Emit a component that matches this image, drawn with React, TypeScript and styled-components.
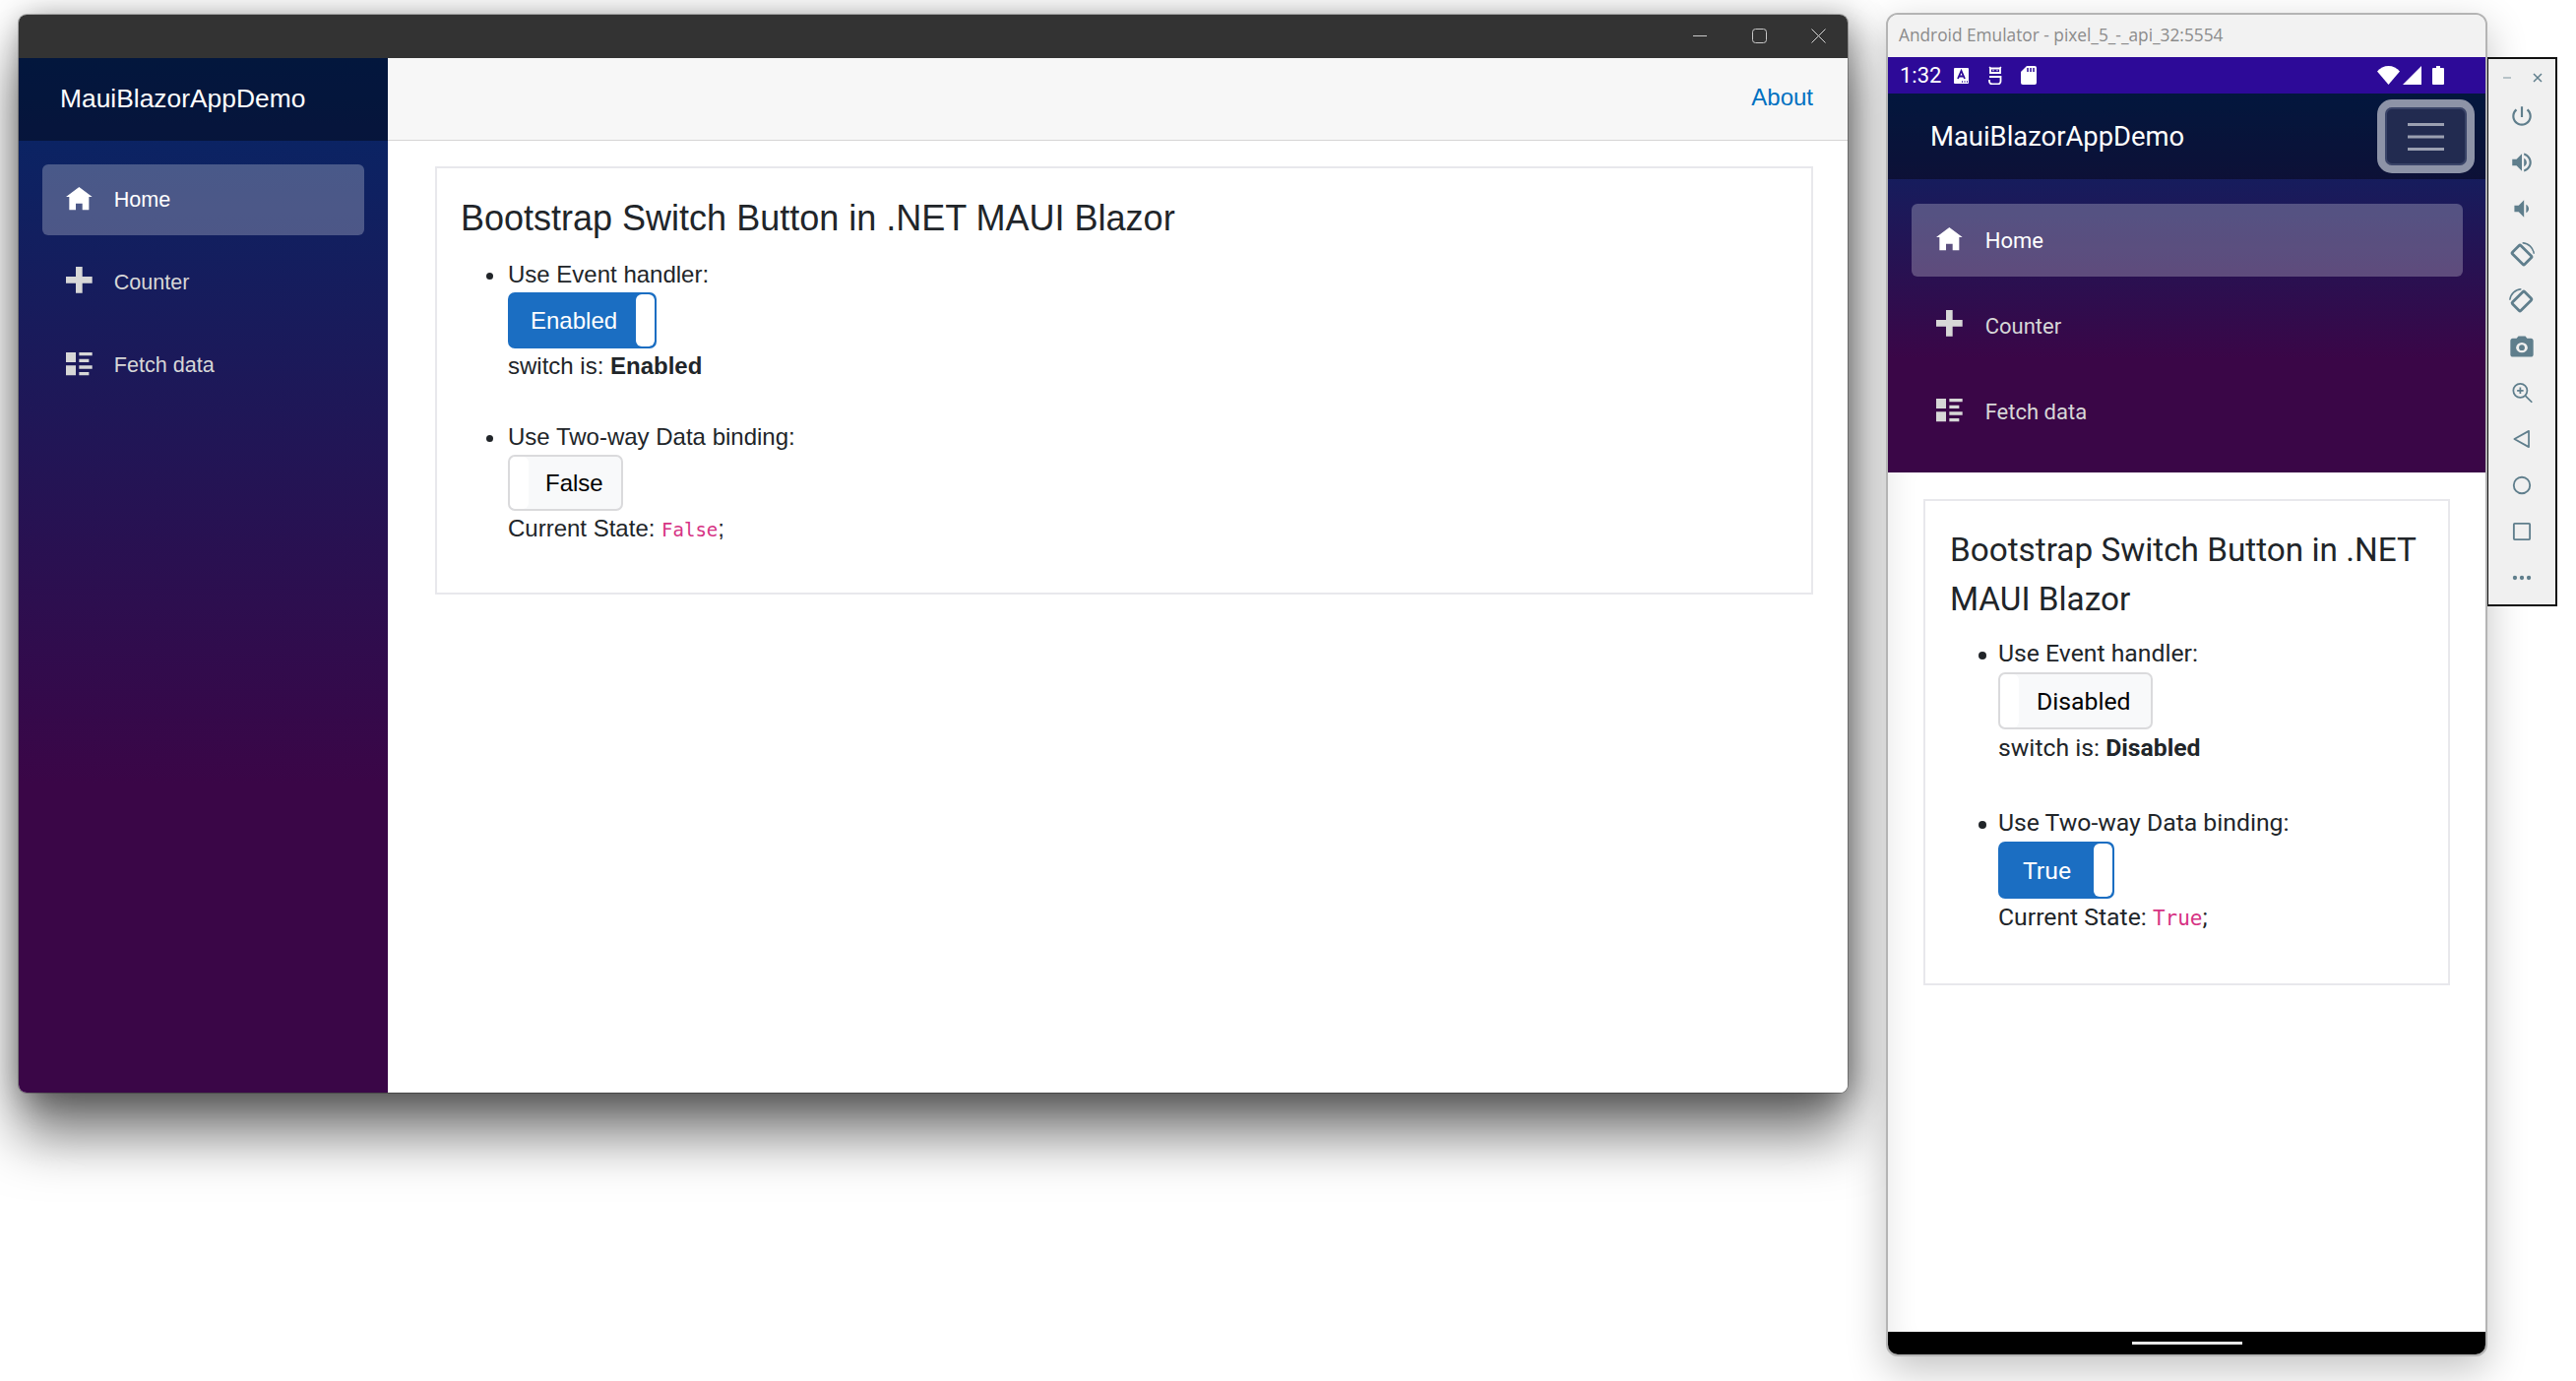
import React from "react";
import styled, { createGlobalStyle } from "styled-components";

const Global = createGlobalStyle`
  html, body { margin: 0; padding: 0; background: #fff; overflow: hidden; }
  * { box-sizing: border-box; }
`;

const Desktop = styled.div`
  width: 2617px;
  height: 1403px;
  padding: 13px 0 0 19px;
  display: flex;
  align-items: flex-start;
  background: #fff;
  overflow: hidden;
`;

/* ---------- desktop window ---------- */
const AppWindow = styled.div`
  width: 1858px;
  height: 1095px;
  margin: 2px 39px 0 0;
  display: flex;
  flex-direction: column;
  border-radius: 8px;
  overflow: hidden;
  flex: none;
  background: #fff;
  font-family: "Liberation Sans", Arial, sans-serif;
  box-shadow: 0 0 0 1px rgba(0, 0, 0, 0.25), 4px 4px 34px rgba(0, 0, 0, 0.42), 0 44px 56px rgba(0, 0, 0, 0.52);
`;
const TitleBar = styled.div`
  height: 44px;
  flex: none;
  background: #333333;
  display: flex;
  align-items: center;
  justify-content: flex-end;
  gap: 45px;
  padding: 0 22px 1px 0;
`;
const AppBody = styled.div`
  flex: 1;
  display: flex;
  min-height: 0;
`;
const Sidebar = styled.div<{ $mobile?: boolean }>`
  display: flex;
  flex-direction: column;
  flex: none;
  width: ${(p) => (p.$mobile ? "100%" : "375px")};
  height: ${(p) => (p.$mobile ? "385px" : "100%")};
  background: linear-gradient(180deg, rgb(5, 39, 103) 0%, #3a0647 70%);
`;
const BrandRow = styled.div<{ $mobile?: boolean }>`
  height: ${(p) => (p.$mobile ? "87px" : "84px")};
  flex: none;
  background: rgba(0, 0, 0, 0.4);
  display: flex;
  align-items: center;
  justify-content: space-between;
  padding: ${(p) => (p.$mobile ? "0 11px 0 43px" : "0 0 1px 42px")};
  color: #fff;
  font-size: ${(p) => (p.$mobile ? "27.4px" : "26.4px")};
`;
const Nav = styled.div<{ $mobile?: boolean }>`
  display: flex;
  flex-direction: column;
  gap: ${(p) => (p.$mobile ? "13px" : "12px")};
  padding: ${(p) => (p.$mobile ? "25px 23px 0 24px" : "24px 24px 0 24px")};
`;
const NavItem = styled.div<{ $active?: boolean; $mobile?: boolean }>`
  height: ${(p) => (p.$mobile ? "74px" : "72px")};
  display: flex;
  align-items: center;
  gap: ${(p) => (p.$mobile ? "23px" : "22px")};
  padding-left: ${(p) => (p.$mobile ? "25px" : "24px")};
  border-radius: 6px;
  font-size: ${(p) => (p.$mobile ? "22px" : "21.6px")};
  color: ${(p) => (p.$active ? "#fff" : "#d7d7d7")};
  background: ${(p) => (p.$active ? "rgba(255, 255, 255, 0.25)" : "transparent")};
`;
const NavGlyph = styled.svg<{ $lift?: number }>`
  width: 26.7px;
  height: 26.7px;
  flex: none;
  fill: currentColor;
  margin-top: ${(p) => -(p.$lift ?? 0)}px;
`;
const MainPane = styled.div`
  flex: 1;
  min-width: 0;
  display: flex;
  flex-direction: column;
`;
const TopRow = styled.div`
  height: 84px;
  flex: none;
  background: #f7f7f7;
  border-bottom: 1px solid #d6d5d5;
  display: flex;
  align-items: center;
  justify-content: flex-end;
  padding: 0 35px 3px 0;
`;
const AboutLink = styled.span`
  font-size: 24px;
  color: #0071c1;
`;
const ContentArea = styled.div<{ $mobile?: boolean }>`
  flex: 1;
  padding: ${(p) => (p.$mobile ? "27px 36px 0 36px" : "26px 35px 0 48px")};
  background: #fff;
  ${(p) => p.$mobile && "box-shadow: inset 26px 0 24px -18px rgba(0, 0, 0, 0.07);"}
`;
const Card = styled.div<{ $mobile?: boolean }>`
  border: 2px solid #e8e8ec;
  color: #212529;
  font-size: ${(p) => (p.$mobile ? "24.75px" : "24px")};
  padding: ${(p) => (p.$mobile ? "25px 25px 47px" : "21px 24px 46px")};
`;
const Title = styled.h3<{ $mobile?: boolean }>`
  margin: 0 0 ${(p) => (p.$mobile ? "11px" : "8px")};
  font-weight: 400;
  font-size: ${(p) => (p.$mobile ? "33.3px" : "36px")};
  line-height: ${(p) => (p.$mobile ? "50px" : "60px")};
`;
const List = styled.ul<{ $mobile?: boolean }>`
  margin: 0;
  list-style: none;
  padding-left: ${(p) => (p.$mobile ? "49px" : "48px")};
  display: flex;
  flex-direction: column;
  gap: ${(p) => (p.$mobile ? "39px" : "35px")};
`;
const ListItem = styled.li<{ $mobile?: boolean }>`
  position: relative;
  &::before {
    content: "";
    position: absolute;
    left: ${(p) => (p.$mobile ? "-20px" : "-22px")};
    top: 17px;
    width: ${(p) => (p.$mobile ? "8px" : "7px")};
    height: ${(p) => (p.$mobile ? "8px" : "7px")};
    border-radius: 50%;
    background: #212529;
  }
`;
const ItemLine = styled.div<{ $mobile?: boolean }>`
  line-height: ${(p) => (p.$mobile ? "38px" : "37px")};
`;
const Switch = styled.div<{ $on?: boolean; $mobile?: boolean }>`
  display: flex;
  width: fit-content;
  height: ${(p) => (p.$mobile ? "58px" : "57px")};
  flex-direction: ${(p) => (p.$on ? "row-reverse" : "row")};
  border: 2px solid ${(p) => (p.$on ? "#1b6ec2" : "#dadadc")};
  border-radius: 7px;
  background: ${(p) => (p.$on ? "#1b6ec2" : "#f8f9fa")};
  overflow: hidden;
`;
const SwitchHandle = styled.div`
  width: 19px;
  flex: none;
  background: #fff;
  border-radius: 6px;
`;
const SwitchLabel = styled.div<{ $on?: boolean; $mobile?: boolean }>`
  display: flex;
  align-items: center;
  color: ${(p) => (p.$on ? "#fff" : "#000")};
  padding: ${(p) =>
    p.$mobile
      ? p.$on
        ? "0 23px 0 23px"
        : "0 20px 0 18px"
      : p.$on
        ? "0 19px 0 21px"
        : "0 18px 0 17px"};
`;
const StatusLine = styled.div<{ $mobile?: boolean }>`
  line-height: ${(p) => (p.$mobile ? "37px" : "36px")};
`;
const Code = styled.code<{ $mobile?: boolean }>`
  font-family: "DejaVu Sans Mono", "Liberation Mono", monospace;
  font-size: ${(p) => (p.$mobile ? "21px" : "19px")};
  color: #d63384;
`;

/* ---------- emulator ---------- */
const EmulatorWindow = styled.div`
  width: 611px;
  height: 1365px;
  flex: none;
  display: flex;
  flex-direction: column;
  border: 2px solid #b4b4b4;
  border-radius: 12px;
  overflow: hidden;
  background: #fff;
  font-family: Roboto, sans-serif;
  box-shadow: 0 14px 40px rgba(0, 0, 0, 0.24);
  position: relative;
`;
const EmuTitle = styled.div`
  height: 43px;
  flex: none;
  background: #f2f2f2;
  color: #8b8b8b;
  font-family: "Open Sans", sans-serif;
  font-size: 17.3px;
  display: flex;
  align-items: center;
  padding: 0 0 2px 11px;
  white-space: nowrap;
`;
const PhoneStatus = styled.div`
  height: 37px;
  flex: none;
  background: #2d0a98;
  color: #fff;
  display: flex;
  align-items: center;
  padding: 0 42px 0 12px;
`;
const ClockText = styled.span`
  font-size: 22px;
  margin-right: 13px;
`;
const StatusGlyph = styled.svg<{ $gap?: number }>`
  flex: none;
  margin-left: ${(p) => p.$gap ?? 0}px;
`;
const Spacer = styled.div`
  flex: 1;
`;
const Burger = styled.div`
  width: 99px;
  height: 75px;
  border: 8px solid #8d93a7;
  border-radius: 15px;
  background: #222b50;
  display: flex;
  align-items: center;
  justify-content: center;
  box-shadow: inset 0 0 0 2px #3a4468;
`;
const BottomBar = styled.div`
  height: 23px;
  flex: none;
  background: #000;
  display: flex;
  align-items: center;
  justify-content: center;
  padding-bottom: 1px;
`;
const HomePill = styled.div`
  width: 112px;
  height: 3px;
  background: #e8e8e8;
`;
const Toolbar = styled.div`
  width: 71px;
  height: 558px;
  margin-top: 45px;
  flex: none;
  background: #f0f0f0;
  border: 2px solid #111;
  border-left-width: 1px;
  display: flex;
  flex-direction: column;
  color: #5f7e8c;
  position: relative;
`;
const ToolbarTop = styled.div`
  height: 34.5px;
  flex: none;
  display: flex;
  align-items: center;
  justify-content: space-between;
  padding: 4px 12px 0 13px;
`;
const ToolSlot = styled.div`
  height: 46.9px;
  flex: none;
  display: flex;
  align-items: center;
  justify-content: center;
`;

/* ---------- icons ---------- */
const HomeIcon = () => (
  <NavGlyph viewBox="0 0 8 8"><path d="M4 0l-4 3h1v4h2v-2h2v2h2v-4.03l1 .03-4-3z" /></NavGlyph>
);
const PlusIcon = () => (
  <NavGlyph $lift={5} viewBox="0 0 8 8"><path d="M3 0v3h-3v2h3v3h2v-3h3v-2h-3v-3h-2z" /></NavGlyph>
);
const ListIcon = () => (
  <NavGlyph viewBox="0 0 8 8">
    <path d="M0 0v3h3v-3h-3zm4 0v1h4v-1h-4zm0 2v1h3v-1h-3zm-4 2v3h3v-3h-3zm4 0v1h4v-1h-4zm0 2v1h3v-1h-3z" />
  </NavGlyph>
);

const Tool = ({ children, size = 26 }: { children: React.ReactNode; size?: number }) => (
  <ToolSlot>
    <svg width={size} height={size} viewBox="0 0 24 24" fill="currentColor">{children}</svg>
  </ToolSlot>
);

const ToolIcons = () => (
  <>
    <Tool><path d="M13 3h-2v10h2V3zm4.83 2.17l-1.42 1.42C17.99 7.86 19 9.81 19 12c0 3.87-3.13 7-7 7s-7-3.13-7-7c0-2.19 1.01-4.14 2.58-5.42L6.17 5.17C4.23 6.82 3 9.26 3 12c0 4.97 4.03 9 9 9s9-4.03 9-9c0-2.74-1.23-5.18-3.17-6.83z" /></Tool>
    <Tool><path d="M3 9v6h4l5 5V4L7 9H3zm13.5 3c0-1.77-1.02-3.29-2.5-4.03v8.05c1.48-.73 2.5-2.25 2.5-4.02zM14 3.23v2.06c2.89.86 5 3.54 5 6.71s-2.11 5.85-5 6.71v2.06c4.01-.91 7-4.49 7-8.77s-2.99-7.86-7-8.77z" /></Tool>
    <Tool><path d="M18.5 12c0-1.77-1.02-3.29-2.5-4.03v8.05c1.48-.73 2.5-2.25 2.5-4.02zM5 9v6h4l5 5V4L9 9H5z" /></Tool>
    <Tool size={30}>
      <g fill="none" stroke="currentColor">
        <rect x="7.2" y="5" width="9.6" height="14" rx="1" strokeWidth="2.2" transform="rotate(-45 12 12)" />
        <path d="M12.5 2.2A9.8 9.8 0 0 1 21.8 11" strokeWidth="1.2" />
      </g>
    </Tool>
    <Tool size={30}>
      <g fill="none" stroke="currentColor">
        <rect x="7.2" y="5" width="9.6" height="14" rx="1" strokeWidth="2.2" transform="rotate(45 12 12)" />
        <path d="M11.5 2.2A9.8 9.8 0 0 0 2.2 11" strokeWidth="1.2" />
      </g>
    </Tool>
    <Tool size={28}>
      <path d="M9 3L7.4 5H4c-1.1 0-2 .9-2 2v12c0 1.1.9 2 2 2h16c1.1 0 2-.9 2-2V7c0-1.1-.9-2-2-2h-3.4L15 3H9z" />
      <ellipse cx="12" cy="13" rx="5" ry="4.4" fill="#f0f0f0" />
      <circle cx="12" cy="13" r="2.5" />
    </Tool>
    <Tool>
      <g fill="none" stroke="currentColor" strokeWidth="1.6">
        <circle cx="10.5" cy="10" r="6.5" />
        <path d="M15.3 14.8L21.5 21M10.5 7v6M7.5 10h6" />
      </g>
    </Tool>
    <Tool>
      <path d="M18.5 4.5L5 12l13.5 7.5z" fill="none" stroke="currentColor" strokeWidth="1.6" strokeLinejoin="round" />
    </Tool>
    <Tool><circle cx="12" cy="12" r="7.6" fill="none" stroke="currentColor" strokeWidth="1.7" /></Tool>
    <Tool><rect x="4.5" y="4.5" width="15" height="15" rx="0.8" fill="none" stroke="currentColor" strokeWidth="1.7" /></Tool>
    <Tool>
      <circle cx="5.5" cy="12" r="2" />
      <circle cx="12" cy="12" r="2" />
      <circle cx="18.5" cy="12" r="2" />
    </Tool>
  </>
);

const BodyContent = ({
  mobile,
  first,
  firstOn,
  second,
  secondOn,
}: {
  mobile?: boolean;
  first: string;
  firstOn: boolean;
  second: string;
  secondOn: boolean;
}) => (
  <Card $mobile={mobile}>
    <Title $mobile={mobile}>Bootstrap Switch Button in .NET MAUI Blazor</Title>
    <List $mobile={mobile}>
      <ListItem $mobile={mobile}>
        <ItemLine $mobile={mobile}>Use Event handler:</ItemLine>
        <Switch $on={firstOn} $mobile={mobile}>
          <SwitchHandle />
          <SwitchLabel $on={firstOn} $mobile={mobile}>{first}</SwitchLabel>
        </Switch>
        <StatusLine $mobile={mobile}>switch is: <b>{first}</b></StatusLine>
      </ListItem>
      <ListItem $mobile={mobile}>
        <ItemLine $mobile={mobile}>Use Two-way Data binding:</ItemLine>
        <Switch $on={secondOn} $mobile={mobile}>
          <SwitchHandle />
          <SwitchLabel $on={secondOn} $mobile={mobile}>{second}</SwitchLabel>
        </Switch>
        <StatusLine $mobile={mobile}>Current State: <Code $mobile={mobile}>{second}</Code>;</StatusLine>
      </ListItem>
    </List>
  </Card>
);

const NavItems = ({ mobile }: { mobile?: boolean }) => (
  <Nav $mobile={mobile}>
    <NavItem $active $mobile={mobile}><HomeIcon />Home</NavItem>
    <NavItem $mobile={mobile}><PlusIcon />Counter</NavItem>
    <NavItem $mobile={mobile}><ListIcon />Fetch data</NavItem>
  </Nav>
);

export default function App() {
  return (
    <>
      <Global />
      <Desktop>
        <AppWindow>
          <TitleBar>
            <svg width="15" height="15" viewBox="0 0 15 15"><path d="M0 7.5h14" stroke="#c8c8c8" strokeWidth="1" /></svg>
            <svg width="15" height="15" viewBox="0 0 15 15"><rect x=".5" y=".5" width="14" height="14" rx="3" fill="none" stroke="#c8c8c8" /></svg>
            <svg width="15" height="15" viewBox="0 0 15 15"><path d="M.5.5l14 14M14.5.5l-14 14" stroke="#d8d8d8" strokeWidth="1" /></svg>
          </TitleBar>
          <AppBody>
            <Sidebar>
              <BrandRow>MauiBlazorAppDemo</BrandRow>
              <NavItems />
            </Sidebar>
            <MainPane>
              <TopRow><AboutLink>About</AboutLink></TopRow>
              <ContentArea>
                <BodyContent first="Enabled" firstOn second="False" secondOn={false} />
              </ContentArea>
            </MainPane>
          </AppBody>
        </AppWindow>

        <EmulatorWindow>
          <EmuTitle>Android Emulator - pixel_5_-_api_32:5554</EmuTitle>
          <PhoneStatus>
            <ClockText>1:32</ClockText>
            <StatusGlyph width="15" height="16" viewBox="0 0 15 16">
              <rect width="15" height="16" rx="1" fill="#fff" />
              <path d="M4 11l3.5-8L11 11M5.5 8.5h4" fill="none" stroke="#2d0a98" strokeWidth="1.8" />
              <path d="M8 14h1M10.5 14h1M13 14h1" stroke="#2d0a98" strokeWidth="1.4" />
            </StatusGlyph>
            <StatusGlyph $gap={20} width="14" height="19" viewBox="0 0 14 19">
              <path d="M2 2.5h10v4.5H2zM1 11h11.5v4.5a3 3 0 0 1-3 3H4a3 3 0 0 1-3-3V14" fill="none" stroke="#fff" strokeWidth="1.8" />
              <path d="M1 1l2 2M13 1l-2 2" stroke="#fff" strokeWidth="1.4" />
              <path d="M4.5 4.5h1M8.5 4.5h1" stroke="#fff" strokeWidth="1.6" />
            </StatusGlyph>
            <StatusGlyph $gap={19} width="16" height="19" viewBox="0 0 16 19">
              <path d="M6 0h8a2 2 0 0 1 2 2v15a2 2 0 0 1-2 2H2a2 2 0 0 1-2-2V6z" fill="#fff" />
              <path d="M7 2v4M10 2v4M13 2v4" stroke="#2d0a98" strokeWidth="1.5" />
            </StatusGlyph>
            <Spacer />
            <StatusGlyph width="23" height="19" viewBox="0 0 23 19">
              <path d="M0 5.5C3 2 7 0 11.5 0S20 2 23 5.5L11.5 19z" fill="#fff" />
            </StatusGlyph>
            <StatusGlyph $gap={3} width="19" height="19" viewBox="0 0 19 19">
              <path d="M19 0v19H0z" fill="#fff" />
            </StatusGlyph>
            <StatusGlyph $gap={11} width="12" height="19" viewBox="0 0 12 19">
              <path d="M4 0h4v2h3a1 1 0 0 1 1 1v15a1 1 0 0 1-1 1H1a1 1 0 0 1-1-1V3a1 1 0 0 1 1-1h3z" fill="#fff" />
            </StatusGlyph>
          </PhoneStatus>
          <Sidebar $mobile>
            <BrandRow $mobile>
              MauiBlazorAppDemo
              <Burger>
                <svg width="37" height="28" viewBox="0 0 37 28">
                  <path d="M0 1.5h37M0 14h37M0 26.5h37" stroke="#9ba0b1" strokeWidth="3" />
                </svg>
              </Burger>
            </BrandRow>
            <NavItems mobile />
          </Sidebar>
          <ContentArea $mobile>
            <BodyContent mobile first="Disabled" firstOn={false} second="True" secondOn />
          </ContentArea>
          <BottomBar><HomePill /></BottomBar>
        </EmulatorWindow>

        <Toolbar>
          <ToolbarTop>
            <svg width="12" height="12" viewBox="0 0 12 12"><path d="M2 6h8" stroke="#a9b8bf" strokeWidth="1.6" /></svg>
            <svg width="12" height="12" viewBox="0 0 12 12"><path d="M2 2l8 8M10 2l-8 8" stroke="#5f7e8c" strokeWidth="1.5" /></svg>
          </ToolbarTop>
          <ToolIcons />
        </Toolbar>
      </Desktop>
    </>
  );
}
